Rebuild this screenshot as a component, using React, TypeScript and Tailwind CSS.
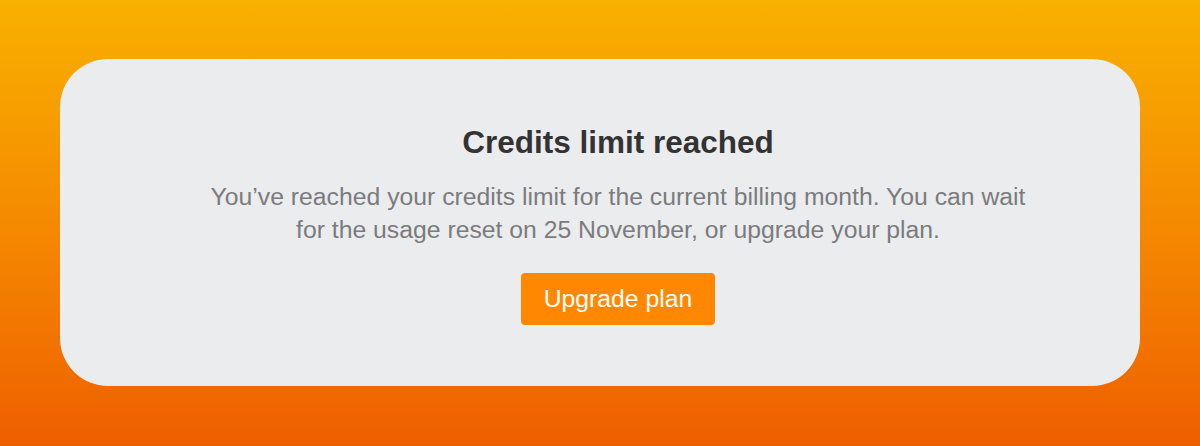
export default function App() {
  return (
    <div className="w-[1200px] h-[446px] bg-gradient-to-b from-[#f8b100] to-[#ee5e00] px-[60px] pt-[59px] pb-[60px] font-['Liberation_Sans',Arial,sans-serif]">
      <div className="h-[327px] bg-[#ebecee] rounded-[48px] flex flex-col items-center pt-[65px] pl-[36px]">
        <h1 className="text-[31.5px] leading-[36px] font-bold text-[#333333]">Credits limit reached</h1>
        <p className="mt-[20px] w-[830px] text-center text-[24.75px] leading-[33px] text-[#7b7b7d]">
          You’ve reached your credits limit for the current billing month. You can wait for the usage reset on 25
          November, or upgrade your plan.
        </p>
        <button className="mt-[27px] w-[194px] h-[52px] rounded-[4px] bg-[#ff8800] text-white text-[24.75px]">
          Upgrade plan
        </button>
      </div>
    </div>
  );
}
